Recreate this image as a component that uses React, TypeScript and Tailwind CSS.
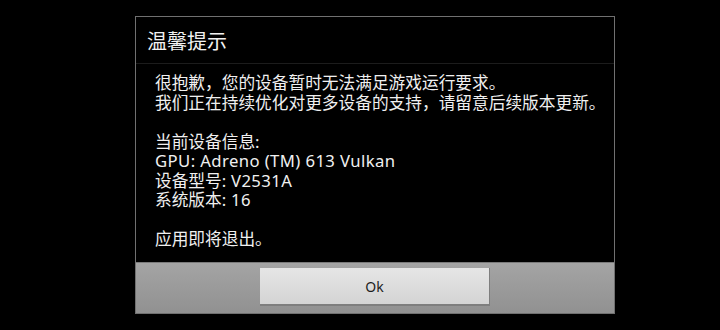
import React from 'react';

const FONT = { fontFamily: '"Noto Sans", "Noto Sans CJK SC", sans-serif' };

// latin parts get a touch of letter spacing to match the device font
const lines: [string, string][] = [
  ['很抱歉，您的设备暂时无法满足游戏运行要求。', ''],
  ['我们正在持续优化对更多设备的支持，请留意后续版本更新。', ''],
  ['', ''],
  ['当前设备信息:', ''],
  ['', 'GPU: Adreno (TM) 613 Vulkan'],
  ['设备型号:', ' V2531A'],
  ['系统版本:', ' 16'],
  ['', ''],
  ['应用即将退出。', ''],
];

export default function App() {
  return (
    <div className="w-[720px] h-[330px] bg-black pt-[16px] pl-[135px]" style={FONT}>
      <div className="w-[480px] h-[298px] border border-[#707070] flex flex-col bg-black">
        {/* title */}
        <div className="h-[47px] border-b border-[#1c1c1c] pl-[11px] pt-[12px]">
          <span className="text-[20px] leading-[26px] text-[#f2f2f2]">温馨提示</span>
        </div>

        {/* message */}
        <div className="flex-1 pl-[19px] pt-[9px] text-[16.7px] text-[#f0f0f0]">
          {lines.map(([cjk, latin], i) => (
            <div key={i} className="h-[19.5px] leading-[19.5px] whitespace-pre">
              {cjk}
              {latin && <span className="tracking-[0.4px]">{latin}</span>}
            </div>
          ))}
        </div>

        {/* button bar */}
        <div className="h-[51px] border-t border-[#7a7a7a] bg-gradient-to-b from-[#a4a4a4] to-[#919191] flex justify-center pt-[5px]">
          <button className="w-[230px] h-[38px] bg-gradient-to-b from-[#e6e6e6] to-[#d4d4d4] border-b-2 border-r border-[#7e7e7e] text-[14px] text-[#1e1e1e] flex items-center justify-center">
            Ok
          </button>
        </div>
      </div>
    </div>
  );
}
